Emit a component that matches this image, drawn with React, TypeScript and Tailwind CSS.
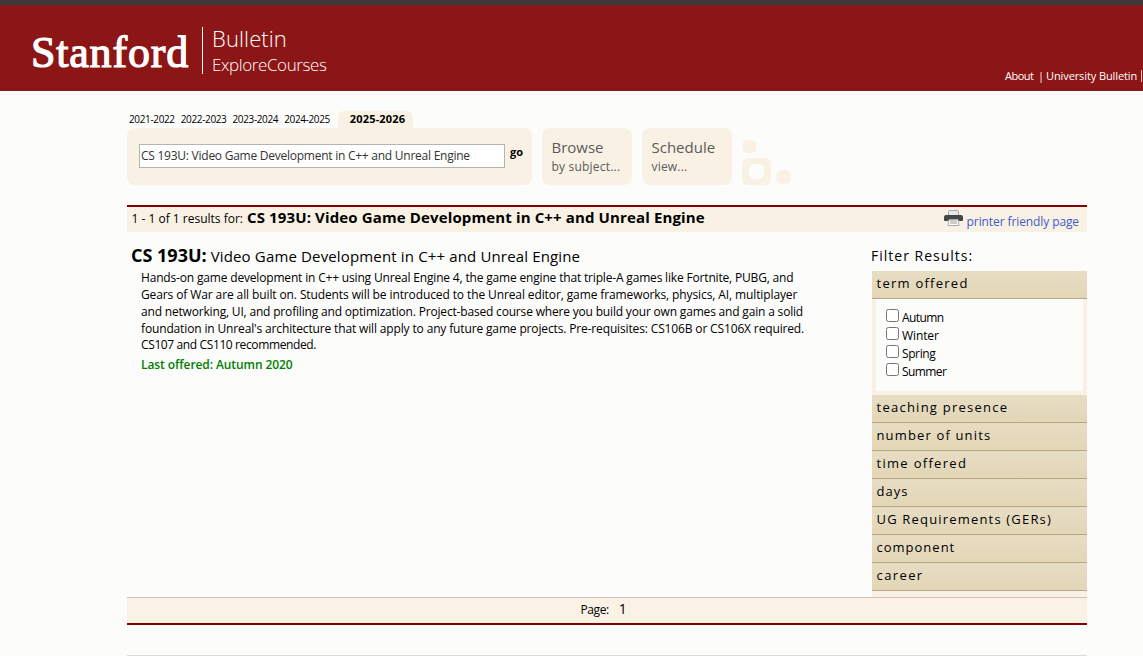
import type { ReactNode } from "react";

const years = ["2021-2022", "2022-2023", "2023-2024", "2024-2025"];
const terms = [
  { label: "Autumn", tracking: "tracking-[-0.6px]" },
  { label: "Winter", tracking: "tracking-[-0.1px]" },
  { label: "Spring", tracking: "tracking-[-0.4px]" },
  { label: "Summer", tracking: "tracking-[-0.6px]" },
];
const filters = [
  { label: "teaching presence", tracking: "tracking-[1.25px]" },
  { label: "number of units", tracking: "tracking-[1.15px]" },
  { label: "time offered", tracking: "tracking-[1.3px]" },
  { label: "days", tracking: "tracking-[1px]" },
  { label: "UG Requirements (GERs)", tracking: "tracking-[1.18px]" },
  { label: "component", tracking: "tracking-[1px]" },
  { label: "career", tracking: "tracking-[1.4px]" },
];
const description = [
  { text: "Hands-on game development in C++ using Unreal Engine 4, the game engine that triple-A games like Fortnite, PUBG, and", tracking: "tracking-[-0.173px]" },
  { text: "Gears of War are all built on. Students will be introduced to the Unreal editor, game frameworks, physics, AI, multiplayer", tracking: "tracking-[-0.11px]" },
  { text: "and networking, UI, and profiling and optimization. Project-based course where you build your own games and gain a solid", tracking: "tracking-[-0.18px]" },
  { text: "foundation in Unreal's architecture that will apply to any future game projects. Pre-requisites: CS106B or CS106X required.", tracking: "tracking-[-0.145px]" },
  { text: "CS107 and CS110 recommended.", tracking: "tracking-[-0.38px] leading-4" },
];

const Header = function () {
  return (
    <header className="flex h-[91px] justify-between overflow-hidden border-t-[5px] border-[#3a3a3a] bg-[#8c1515] text-white">
      <div className="flex pl-[31px]">
        <span className="w-[171px] pt-[23px] font-['Liberation_Serif',serif] text-[44px] leading-[50px] tracking-[0.8px] [-webkit-text-stroke:1.2px_white]">
          Stanford
        </span>
        <div className="mt-[22px] h-[47px] border-l border-white pl-[9px] font-light">
          <div className="h-[26px] text-[22px] leading-[22px] tracking-[0.1px]">
            Bulletin
          </div>
          <div className="text-[17px] leading-6 tracking-[-0.4px]">
            ExploreCourses
          </div>
        </div>
      </div>
      <nav className="mt-[63px] flex w-[138px] gap-1 whitespace-nowrap text-[11px] leading-4">
        <a className="w-[29px] tracking-[-0.5px]">About</a>
        <span className="w-1">|</span>
        <a className="w-[91px] tracking-[-0.1px]">University Bulletin</a>
        <span className="h-3 w-px translate-y-[2px] bg-white/80" />
      </nav>
    </header>
  );
};

const MenuCard = function ({ title, note }: { title: string; note: string }) {
  return (
    <div className="h-[57px] w-[90px] whitespace-nowrap rounded-lg bg-[#f9f2e4] pl-[9.5px] pt-[9px] text-[#5b5b5b]">
      <div className="text-[15px] leading-5">{title}</div>
      <div className="text-xs leading-5 tracking-[0.2px]">{note}</div>
    </div>
  );
};

const PrinterIcon = function () {
  return (
    <svg width="19" height="17" viewBox="0 0 19 17" className="shrink-0">
      <path d="M4.5 6V1.5Q4.5.5 5.5.5h8q1 0 1 1V6" fill="#e8e8e8" stroke="#aaa" />
      <path d="M2 5h15q2 0 2 2v3q0 1-1 1H1q-1 0-1-1V7q0-2 2-2Z" fill="#454746" />
      <path d="M5 9.5h9l1 6H4Z" fill="#fff" stroke="#aaa" />
      <path d="M6 10h7v4H6z" fill="#ccc" />
    </svg>
  );
};

const FilterRow = function ({ children }: { children: ReactNode }) {
  return (
    <div className="h-7 whitespace-nowrap border-b border-[#b5a88a] bg-linear-to-b from-[#e7ddc3] to-[#e2d6b6] pl-[4.5px] text-[13px] leading-[25px]">
      {children}
    </div>
  );
};

const App = function () {
  return (
    <div className="h-[656px] overflow-hidden bg-[#fcfcfa] font-['Open_Sans',sans-serif] text-black">
      <Header />
      <main className="ml-[127px] w-[960px]">
        <div className="flex h-[37px] items-end whitespace-nowrap pt-[19px]">
          <div className="flex w-[211px] gap-[6px] self-start pl-[2px] pt-[1px] text-[10px] leading-4 tracking-[-0.36px]">
            {years.map((year) => (
              <a key={year}>{year}</a>
            ))}
          </div>
          <b className="h-[17px] w-[75px] rounded-t-md bg-[#f9f2e4] pl-1 text-center text-[11px] font-bold leading-4 tracking-[0.2px]">
            2025-2026
          </b>
        </div>

        <div className="flex h-[77px] gap-[10px]">
          <div className="flex h-[57px] w-[405px] gap-[5px] rounded-lg bg-[#f9f2e4] pl-3 pt-4">
            <div className="h-6 w-[366px] whitespace-nowrap border border-[#b5b5b0] bg-white pl-[1px] text-[12px] leading-[22px] tracking-[-0.25px] text-[#333]">
              CS 193U: Video Game Development in C++ and Unreal Engine
            </div>
            <b className="text-[11px] leading-4">go</b>
          </div>
          <MenuCard title="Browse" note="by subject..." />
          <MenuCard title="Schedule" note="view..." />
          <svg width="50" height="57" viewBox="0 0 50 57" fill="#f9f2e4">
            <rect x="0.5" y="12" width="14" height="13" rx="5" />
            <rect x="0" y="30" width="29" height="27" rx="6" />
            <rect x="7" y="36" width="15" height="15" rx="5" fill="#fcfcfa" />
            <rect x="34" y="42" width="15" height="14" rx="6" />
          </svg>
        </div>

        <div className="flex h-[27px] justify-between whitespace-nowrap border-t-2 border-[#820000] bg-[#f9f2e4] pl-[4.5px] pr-2">
          <div className="flex items-baseline gap-1 leading-[21px]">
            <span className="text-[12px]">1 - 1 of 1 results for:</span>
            <b className="text-[15px] tracking-[0.13px]">
              CS 193U: Video Game Development in C++ and Unreal Engine
            </b>
          </div>
          <div className="flex gap-1 pt-[3px] text-[12px] leading-6 tracking-[-0.1px] text-[#3f5bcc]">
            <PrinterIcon />
            <a>printer friendly page</a>
          </div>
        </div>

        <div className="flex h-[365px] justify-between">
          <section className="w-[700px] whitespace-nowrap pl-1 pt-[11px]">
            <h2 className="flex h-[25px] items-baseline gap-1 leading-6">
              <b className="text-[18px]">CS 193U:</b>
              <span className="text-[15px] tracking-[0.15px]">
                Video Game Development in C++ and Unreal Engine
              </span>
            </h2>
            <div className="pl-[10px] pt-[1px] text-[12px] leading-[17px]">
              {description.map((line) => (
                <div key={line.text} className={line.tracking}>
                  {line.text}
                </div>
              ))}
            </div>
            <div className="pl-[10px] pt-[3px] text-[12px] font-semibold leading-[17px] tracking-[-0.08px] text-[#008000]">
              Last offered: Autumn 2020
            </div>
          </section>

          <aside className="w-[215px] bg-[#f9f2e4]">
            <h3 className="h-[39px] bg-[#fcfcfa] pt-[14px] text-[14px] leading-5 tracking-[1px]">
              <span className="-ml-px">Filter Results:</span>
            </h3>
            <FilterRow>
              <span className="tracking-[1.25px]">term offered</span>
            </FilterRow>
            <div className="mx-1 mb-1 h-[92px] bg-[#fcfcfa] pl-[10px] pt-[9px]">
              {terms.map((term) => (
                <label key={term.label} className="flex h-[18px] gap-[3px] text-[12px] leading-[18px]">
                  <input
                    type="checkbox"
                    className="mt-[1px] size-[13px] shrink-0 appearance-none rounded-[2.5px] border border-[#767676] bg-white"
                  />
                  <span className={`pt-[1px] ${term.tracking}`}>{term.label}</span>
                </label>
              ))}
            </div>
            {filters.map((filter) => (
              <FilterRow key={filter.label}>
                <span className={filter.tracking}>{filter.label}</span>
              </FilterRow>
            ))}
          </aside>
        </div>

        <footer className="flex h-7 items-baseline gap-[10px] border-b-2 border-t border-b-[#820000] border-t-[#d9bfb8] bg-[#faf2e5] pl-[453.5px] leading-[21px]">
          <span className="text-[12px] tracking-[-0.4px]">Page:</span>
          <span className="text-[14px] font-medium">1</span>
        </footer>
        <div className="mt-[30px] h-px bg-[#dcdcdc]" />
      </main>
    </div>
  );
};

export default App;
